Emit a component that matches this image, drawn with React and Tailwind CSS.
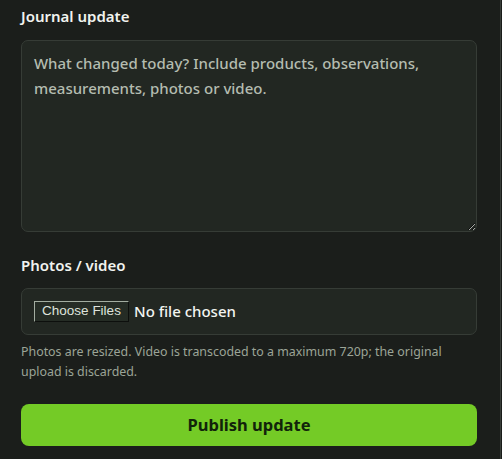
import React from 'react';

const font = { fontFamily: '"Noto Sans", "DejaVu Sans", sans-serif' };

export default function App() {
  return (
    <div className="w-[502px] h-[459px] bg-[#1a1d1a] overflow-hidden" style={font}>
      <div className="w-[501px] h-full border-r border-[#393e39] bg-[#1b1e1b] pl-[21px] pr-[23px]">
        {/* Journal text */}
        <label className="block pt-[6px] h-[40px] text-[15px] leading-[20px] font-semibold text-[#f1f3ef]">
          Journal update
        </label>
        <textarea
          className="block w-full h-[192px] rounded-[7px] border border-[#363c36] bg-[#222722] px-[12px] py-[10px] text-[15px] leading-[25px] font-medium text-[#e4e8e1] placeholder:text-[#b4bcb0] outline-none"
          placeholder="What changed today? Include products, observations, measurements, photos or video."
        />

        {/* Media */}
        <label className="block mt-[23px] h-[20px] text-[15px] leading-[20px] font-semibold text-[#f1f3ef]">
          Photos / video
        </label>
        <div className="mt-[13px] h-[47px] rounded-[7px] border border-[#363c36] bg-[#222722] flex items-center pl-[12px] gap-[5px]">
          <span
            className="h-[21px] w-[95px] flex items-center justify-center bg-[#252c25] border border-t-[#a3ada1] border-l-[#a3ada1] border-b-[#0d0f0d] border-r-[#0d0f0d] text-[13.5px] text-[#dfe3dc]"
            style={{ fontFamily: '"Liberation Sans", Arial, sans-serif' }}
          >
            Choose Files
          </span>
          <span className="text-[15px] font-medium text-[#f3f5f1]">No file chosen</span>
        </div>
        <p className="mt-[7px] text-[12.4px] leading-[20px] text-[#9ba497]">
          Photos are resized. Video is transcoded to a maximum 720p; the original upload is discarded.
        </p>

        <button className="mt-[22px] w-full h-[42px] rounded-[8px] bg-[#74cb26] text-[#11230a] text-[16.5px] font-bold">
          Publish update
        </button>
      </div>
    </div>
  );
}
